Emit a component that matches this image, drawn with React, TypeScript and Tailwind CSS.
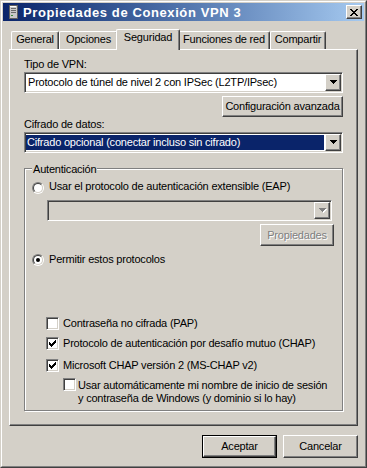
import React from "react";

const raised =
  "border border-t-white border-l-white border-r-[#404040] border-b-[#404040] shadow-[inset_-1px_-1px_0_#808080]";
const sunken =
  "border border-t-[#808080] border-l-[#808080] border-r-white border-b-white shadow-[inset_1px_1px_0_#404040,inset_-1px_-1px_0_#d4d0c8]";

const tabs = [
  { label: "General", w: "w-[48px]" },
  { label: "Opciones", w: "w-[59px]" },
  { label: "Seguridad", w: "w-[64px]", active: true },
  { label: "Funciones de red", w: "w-[92px]" },
  { label: "Compartir", w: "w-[56px]" },
];

function Arrow({ disabled }: { disabled?: boolean }) {
  const fill = disabled ? "#808080" : "#000";
  return (
    <svg width="8" height="5" viewBox="0 0 8 5" shapeRendering="crispEdges">
      {disabled && (
        <g fill="#fff">
          <rect x="1" y="1" width="7" height="1" />
          <rect x="2" y="2" width="5" height="1" />
          <rect x="3" y="3" width="3" height="1" />
          <rect x="4" y="4" width="1" height="1" />
        </g>
      )}
      <g fill={fill}>
        <rect x="0" y="0" width="7" height="1" />
        <rect x="1" y="1" width="5" height="1" />
        <rect x="2" y="2" width="3" height="1" />
        <rect x="3" y="3" width="1" height="1" />
      </g>
    </svg>
  );
}

function DropButton({ disabled }: { disabled?: boolean }) {
  return (
    <div className={`flex h-full w-[16px] shrink-0 items-center justify-center bg-[#d4d0c8] pl-[1px] ${raised}`}>
      <Arrow disabled={disabled} />
    </div>
  );
}

function Check() {
  return (
    <svg width="7" height="7" viewBox="0 0 7 7" shapeRendering="crispEdges" fill="#000">
      <rect x="6" y="0" width="1" height="1" />
      <rect x="5" y="1" width="2" height="1" />
      <rect x="0" y="2" width="1" height="1" />
      <rect x="4" y="2" width="3" height="1" />
      <rect x="0" y="3" width="2" height="1" />
      <rect x="3" y="3" width="3" height="1" />
      <rect x="0" y="4" width="5" height="1" />
      <rect x="1" y="5" width="3" height="1" />
      <rect x="2" y="6" width="1" height="1" />
    </svg>
  );
}

function Checkbox({ checked }: { checked?: boolean }) {
  return (
    <div className={`flex h-[13px] w-[13px] shrink-0 items-center justify-center bg-white ${sunken}`}>
      {checked && <Check />}
    </div>
  );
}

function Radio({ checked }: { checked?: boolean }) {
  return (
    <div className="h-[12px] w-[12px] shrink-0 rounded-full border border-t-[#808080] border-l-[#808080] border-r-white border-b-white">
      <div className="flex h-full w-full items-center justify-center rounded-full border border-t-[#404040] border-l-[#404040] border-r-[#d4d0c8] border-b-[#d4d0c8] bg-white">
        {checked && <div className="h-[4px] w-[4px] rounded-full bg-black" />}
      </div>
    </div>
  );
}

export default function App() {
  return (
    <div className="h-[468px] w-[367px] border border-t-[#d4d0c8] border-l-[#d4d0c8] border-r-[#404040] border-b-[#404040] bg-[#d4d0c8] font-['Liberation_Sans',Arial,sans-serif] text-[11px] leading-[13px] tracking-[-0.2px] text-black">
      <div className="flex h-full w-full flex-col border border-t-white border-l-white border-r-[#808080] border-b-[#808080] p-[1px]">
        {/* title bar */}
        <div className="flex h-[18px] shrink-0 items-center bg-linear-to-r from-[#0a246a] to-[#a6caf0]">
          <svg className="ml-[6px]" width="9" height="14" viewBox="0 0 9 14" shapeRendering="crispEdges">
            <rect x="0" y="0" width="9" height="14" fill="#606060" />
            <rect x="1" y="1" width="7" height="12" fill="#c8c8c8" />
            <rect x="1" y="1" width="6" height="1" fill="#ffffff" />
            <rect x="2" y="3" width="5" height="1" fill="#6a6a6a" />
            <rect x="2" y="5" width="5" height="1" fill="#6a6a6a" />
            <rect x="2" y="7" width="5" height="1" fill="#6a6a6a" />
            <rect x="2" y="10" width="2" height="1" fill="#3a8a3a" />
          </svg>
          <span className="ml-[5px] flex-1 text-[13px] font-bold tracking-[0.6px] text-white">
            Propiedades de Conexión VPN 3
          </span>
          <div className={`mr-[2px] flex h-[14px] w-[16px] items-center justify-center bg-[#d4d0c8] ${raised}`}>
            <svg width="8" height="7" viewBox="0 0 8 7" shapeRendering="crispEdges" fill="#000">
              <rect x="0" y="0" width="2" height="1" />
              <rect x="6" y="0" width="2" height="1" />
              <rect x="1" y="1" width="2" height="1" />
              <rect x="5" y="1" width="2" height="1" />
              <rect x="2" y="2" width="4" height="1" />
              <rect x="3" y="3" width="2" height="1" />
              <rect x="2" y="4" width="4" height="1" />
              <rect x="1" y="5" width="2" height="1" />
              <rect x="5" y="5" width="2" height="1" />
              <rect x="0" y="6" width="2" height="1" />
              <rect x="6" y="6" width="2" height="1" />
            </svg>
          </div>
        </div>

        <div className="flex flex-1 flex-col px-[6px]">
          {/* tabs */}
          <div className="mt-[8px] flex h-[20px] items-end pl-[2px]">
            {tabs.map((t) =>
              t.active ? (
                <div
                  key={t.label}
                  className={`relative z-10 -mx-[2px] -mb-[1px] flex h-[21px] justify-center rounded-t-[2px] border-x border-t border-l-white border-t-white border-r-[#404040] bg-[#d4d0c8] pt-[1px] shadow-[inset_-1px_0_0_#808080] ${t.w}`}
                >
                  {t.label}
                </div>
              ) : (
                <div
                  key={t.label}
                  className={`flex h-[18px] justify-center rounded-t-[2px] border-x border-t border-l-white border-t-white border-r-[#404040] pt-[1px] shadow-[inset_-1px_0_0_#808080] ${t.w}`}
                >
                  {t.label}
                </div>
              )
            )}
          </div>

          {/* panel */}
          <div className={`flex h-[377px] flex-col px-[14px] pt-[8px] ${raised}`}>
            <div>Tipo de VPN:</div>
            <div className={`mt-[1px] flex h-[21px] bg-white p-[1px] ${sunken}`}>
              <div className="flex flex-1 items-center pl-[2px]">Protocolo de túnel de nivel 2 con IPSec (L2TP/IPsec)</div>
              <DropButton />
            </div>

            <div className="mt-[3px] flex h-[35px] justify-between">
              <div className="self-end">Cifrado de datos:</div>
              <div className={`flex h-[21px] w-[121px] items-center justify-center self-start ${raised}`}>
                Configuración avanzada
              </div>
            </div>

            <div className={`mt-[1px] flex h-[21px] bg-white p-[1px] ${sunken}`}>
              <div className="my-[1px] mr-[1px] flex flex-1 items-center bg-[#0a246a] pl-[1px] text-white">
                Cifrado opcional (conectar incluso sin cifrado)
              </div>
              <DropButton />
            </div>

            {/* group box */}
            <div className="relative mt-[15px] flex h-[243px] flex-col border border-[#808080] pl-[7px] pt-[11px] shadow-[inset_1px_1px_0_#fff,1px_1px_0_#fff]">
              <div className="absolute -top-[6px] left-[7px] bg-[#d4d0c8] px-[1px]">Autenticación</div>

              <div className="flex items-start">
                <div className="mt-[2px]">
                  <Radio />
                </div>
                <span className="ml-[5px]">Usar el protocolo de autenticación extensible (EAP)</span>
              </div>

              <div className={`ml-[15px] mt-[6px] flex h-[21px] w-[285px] bg-[#d4d0c8] p-[1px] ${sunken}`}>
                <div className="flex-1" />
                <DropButton disabled />
              </div>

              <div
                className={`mr-[8px] mt-[3px] flex h-[22px] w-[74px] items-center justify-center self-end text-[#808080] [text-shadow:1px_1px_0_#fff] ${raised}`}
              >
                Propiedades
              </div>

              <div className="mt-[7px] flex items-start">
                <div className="mt-[1px]">
                  <Radio checked />
                </div>
                <span className="ml-[5px]">Permitir estos protocolos</span>
              </div>

              <div className="ml-[14px] mt-[51px] flex items-start">
                <Checkbox />
                <span className="ml-[4px]">Contraseña no cifrada (PAP)</span>
              </div>
              <div className="ml-[14px] mt-[7px] flex items-start">
                <Checkbox checked />
                <span className="ml-[4px]">Protocolo de autenticación por desafío mutuo (CHAP)</span>
              </div>
              <div className="ml-[14px] mt-[9px] flex items-start">
                <Checkbox checked />
                <span className="ml-[4px]">Microsoft CHAP versión 2 (MS-CHAP v2)</span>
              </div>
              <div className="ml-[31px] mt-[6px] flex items-start">
                <Checkbox />
                <span className="ml-[2px] mt-[1px]">
                  Usar automáticamente mi nombre de inicio de sesión
                  <br />
                  y contraseña de Windows (y dominio si lo hay)
                </span>
              </div>
            </div>
          </div>

          {/* buttons */}
          <div className="mt-[9px] flex justify-end gap-[6px]">
            <div className="h-[23px] w-[75px] border border-black">
              <div className={`flex h-full w-full items-center justify-center ${raised}`}>Aceptar</div>
            </div>
            <div className={`flex h-[23px] w-[75px] items-center justify-center ${raised}`}>Cancelar</div>
          </div>
        </div>
      </div>
    </div>
  );
}
